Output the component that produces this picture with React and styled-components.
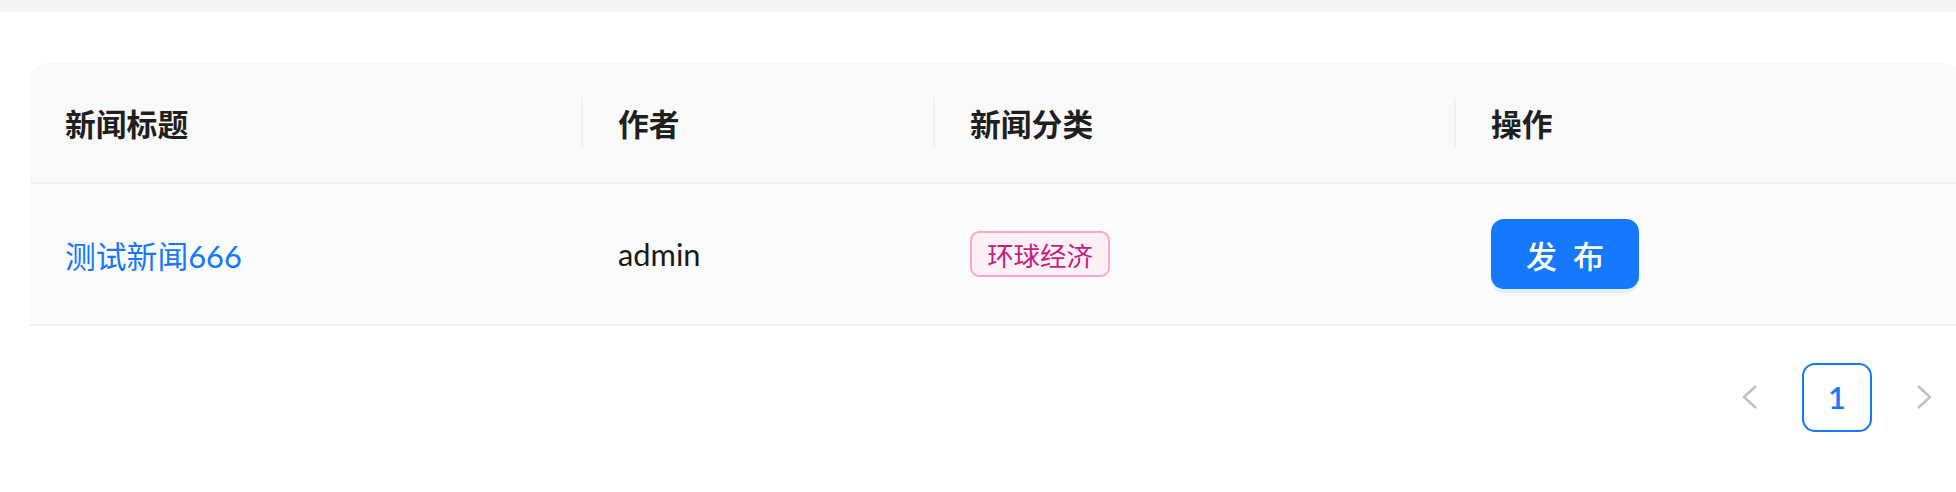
import React from 'react';
import styled, { createGlobalStyle } from 'styled-components';

const GlobalStyle = createGlobalStyle`
    html, body {
        margin: 0;
        padding: 0;
        background: #ffffff;
        overflow: hidden;
    }
    body {
        font-family: Lato, "Noto Sans CJK SC", sans-serif;
        color: rgba(0, 0, 0, 0.88);
    }
`;

const columns = [
    { key: 'title', label: '新闻标题', width: '553px' },
    { key: 'author', label: '作者', width: '352px' },
    { key: 'category', label: '新闻分类', width: '521px' },
    { key: 'action', label: '操作', width: '1fr' }
];

const rows = [
    { id: 1, title: '测试新闻666', author: 'admin', category: '环球经济' }
];

const template = columns.map(c => c.width).join(' ');

const ChevronIcon = ({ dir }) => (
    <svg width="18" height="26" viewBox="0 0 18 26">
        <polyline
            points={dir === 'left' ? '15,2 3,13 15,24' : '3,2 15,13 3,24'}
            fill="none"
            stroke="#bfbfbf"
            strokeWidth="2.4"
        />
    </svg>
);

export default function App() {
    return (
        <>
            <GlobalStyle />
            <TopBar />
            <Content>
                <Table>
                    <HeadRow>
                        {columns.map((col, i) => (
                            <HeadCell key={col.key} divider={i < columns.length - 1}>
                                {col.label}
                            </HeadCell>
                        ))}
                    </HeadRow>
                    {rows.map(row => (
                        <BodyRow key={row.id}>
                            <Cell>
                                <TitleLink href="#">{row.title}</TitleLink>
                            </Cell>
                            <Cell>{row.author}</Cell>
                            <Cell>
                                <Tag>{row.category}</Tag>
                            </Cell>
                            <Cell>
                                <PublishButton type="button">发 布</PublishButton>
                            </Cell>
                        </BodyRow>
                    ))}
                </Table>
                <Pagination>
                    <PageArrow>
                        <ChevronIcon dir="left" />
                    </PageArrow>
                    <PageItem active>1</PageItem>
                    <PageArrow>
                        <ChevronIcon dir="right" />
                    </PageArrow>
                </Pagination>
            </Content>
        </>
    );
}

const TopBar = styled.div`
    height: 12px;
    background: #f4f4f4;
`;

const Content = styled.div`
    padding: 51px 0 0 30px;
`;

const Table = styled.div`
    width: 1929px;
    border-radius: 17px 17px 0 0;
    overflow: hidden;
`;

const HeadRow = styled.div`
    display: grid;
    grid-template-columns: ${template};
    height: 119px;
    background: #f9f9f9;
    border-bottom: 2px solid #f0f0f0;
`;

const HeadCell = styled.div`
    position: relative;
    display: flex;
    align-items: center;
    padding: 0 35px;
    font-family: "Noto Sans CJK SC", sans-serif;
    font-size: 30.8px;
    font-weight: 700;
    color: #1f1f1f;

    &::before {
        content: '';
        display: ${props => (props.divider ? 'block' : 'none')};
        position: absolute;
        right: 0;
        top: 35px;
        width: 2px;
        height: 49px;
        background: #f0f0f0;
    }
`;

const BodyRow = styled.div`
    display: grid;
    grid-template-columns: ${template};
    height: 140px;
    background: #fbfbfb;
    border-bottom: 2px solid #f0f0f0;
`;

const Cell = styled.div`
    display: flex;
    align-items: center;
    padding: 0 35px;
    font-size: 30.8px;
    color: #1a1a1a;
`;

const TitleLink = styled.a`
    color: #1677ff;
    text-decoration: none;
    font-size: 30.8px;
`;

const Tag = styled.span`
    display: inline-flex;
    align-items: center;
    justify-content: center;
    box-sizing: border-box;
    width: 140px;
    height: 46px;
    font-family: "Noto Sans CJK SC", sans-serif;
    font-size: 26.4px;
    color: #c41d7f;
    background: #fff0f6;
    border: 2px solid #ffa3cc;
    border-radius: 9px;
`;

const PublishButton = styled.button`
    box-sizing: border-box;
    width: 148px;
    height: 70px;
    border: none;
    border-radius: 13px;
    background: #1677ff;
    color: #ffffff;
    font-family: "Noto Sans CJK SC", sans-serif;
    font-size: 31px;
    font-weight: 500;
    word-spacing: 9px;
    box-shadow: 0 4px 0 rgba(5, 145, 255, 0.1);
    cursor: pointer;
`;

const Pagination = styled.div`
    width: 1929px;
    display: flex;
    justify-content: flex-end;
    align-items: center;
    gap: 17px;
    margin-top: 36px;
`;

const PageArrow = styled.div`
    width: 70px;
    height: 70px;
    display: flex;
    align-items: center;
    justify-content: center;
`;

const PageItem = styled.div`
    box-sizing: border-box;
    width: 70px;
    height: 69px;
    display: flex;
    align-items: center;
    justify-content: center;
    border: 2px solid ${props => (props.active ? '#1677ff' : '#d9d9d9')};
    border-radius: 13px;
    color: #1677ff;
    font-size: 30.8px;
    font-weight: 600;
`;
